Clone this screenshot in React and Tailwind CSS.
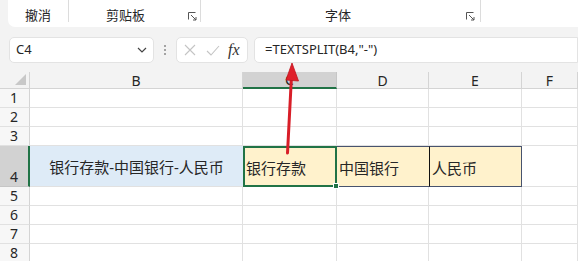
import React from "react";

const font = { fontFamily: '"Noto Sans", "Noto Sans CJK SC", sans-serif' };

function Launcher() {
  return (
    <svg width="9" height="9" viewBox="0 0 9 9" className="block">
      <path d="M0.5 0.5h7" stroke="#555" strokeWidth="1" fill="none" />
      <path d="M0.5 0.5v7" stroke="#555" strokeWidth="1" fill="none" />
      <path d="M3 3l5 5M8 5v3H5" stroke="#555" strokeWidth="1" fill="none" />
    </svg>
  );
}

const cols = ["B", "C", "D", "E", "F"];

export default function App() {
  const rows = [1, 2, 3, 4, 5, 6, 7, 8];
  return (
    <div className="relative w-[578px] h-[261px] overflow-hidden bg-[#f3f3f3] text-[#262626]" style={font}>
      {/* Ribbon */}
      <div className="ml-[8px] h-[27px] bg-white rounded-bl-[7px] flex items-stretch text-[13px]">
        <div className="w-[60px] flex items-end justify-center pb-[2px]">撤消</div>
        <div className="w-px bg-[#dcdcdc] mb-[5px]" />
        <div className="w-[131px] relative flex items-end justify-center pb-[2px]">
          <span className="mr-[18px]">剪贴板</span>
          <span className="absolute right-[3px] bottom-[6px]"><Launcher /></span>
        </div>
        <div className="w-px bg-[#dcdcdc] mb-[5px]" />
        <div className="w-[279px] relative flex items-end justify-center pb-[2px]">
          <span className="mr-[5px]">字体</span>
          <span className="absolute right-[5px] bottom-[6px]"><Launcher /></span>
        </div>
        <div className="w-px bg-[#dcdcdc] mb-[5px]" />
      </div>

      {/* Formula bar */}
      <div className="mt-[10px] h-[26px] flex items-stretch">
        <div className="ml-[9px] w-[145px] bg-white border border-[#e3e3e3] rounded-[5px] flex items-center justify-between pl-[6px] pr-[6px] text-[13px]">
          <span>C4</span>
          <svg width="10" height="6" viewBox="0 0 10 6"><path d="M1 1l4 4 4-4" stroke="#444" strokeWidth="1.2" fill="none" /></svg>
        </div>
        <div className="w-[22px] flex flex-col items-center justify-center gap-[2px]">
          <span className="w-[2px] h-[2px] bg-[#888] rounded-full" />
          <span className="w-[2px] h-[2px] bg-[#888] rounded-full" />
          <span className="w-[2px] h-[2px] bg-[#888] rounded-full" />
        </div>
        <div className="w-[72px] bg-white border border-[#e3e3e3] rounded-[5px] flex items-center pl-[6px]">
          <svg width="12" height="12" viewBox="0 0 12 12" className="ml-[1px]"><path d="M1 1l10 10M11 1L1 11" stroke="#c4c4c4" strokeWidth="1.1" fill="none" /></svg>
          <svg width="14" height="11" viewBox="0 0 14 11" className="ml-[10px]"><path d="M1 6l4 4 8-9" stroke="#c4c4c4" strokeWidth="1.1" fill="none" /></svg>
          <span className="ml-[8px] text-[16px] italic text-[#333] leading-none" style={{ fontFamily: '"Liberation Serif", serif' }}>fx</span>
        </div>
        <div className="ml-[6px] flex-1 bg-white border border-[#e3e3e3] rounded-l-[5px] flex items-center pl-[10px] text-[13px]">
          =TEXTSPLIT(B4,"-")
        </div>
      </div>

      {/* Grid */}
      <div
        className="mt-[9px] grid grid-cols-[30px_213px_94px_92px_93px_56px] grid-rows-[17px_19px_19px_19px_41px_19px_19px_19px_19px] bg-white"
      >
        {/* corner */}
        <div className="bg-[#f3f3f3] border-r border-b border-[#d4d4d4] relative">
          <svg width="11" height="11" viewBox="0 0 11 11" className="absolute left-[15px] bottom-[3px]"><path d="M11 0v11H0z" fill="#c8c8c8" /></svg>
        </div>
        {cols.map((c) => (
          <div
            key={c}
            className={
              c === "C"
                ? "bg-[#d2d2d2] border-b-2 border-b-[#217346] border-r border-r-[#c6c6c6] flex items-center justify-center text-[14px]"
                : "bg-[#f3f3f3] border-b border-b-[#d4d4d4] border-r border-r-[#d4d4d4] flex items-center justify-center text-[14px]"
            }
          >
            {c}
          </div>
        ))}
        {rows.map((r) => (
          <React.Fragment key={r}>
            <div
              className={
                r === 4
                  ? "bg-[#d2d2d2] border-r-2 border-r-[#217346] border-b border-b-[#c6c6c6] flex items-end pl-[10px] text-[14px] leading-[18px]"
                  : "bg-[#f7f7f7] border-r border-r-[#d4d4d4] border-b border-b-[#e1e1e1] flex items-end pl-[10px] text-[14px] leading-[18px]"
              }
            >
              {r}
            </div>
            {r === 4 ? (
              <>
                <div className="bg-[#deebf7] border-b border-[#e1e1e1] flex items-center justify-center pt-[3px] text-[15px]">
                  银行存款-中国银行-人民币
                </div>
                <div className="relative bg-[#fff2cc] border-2 border-[#217346] flex items-center pl-[1px] pt-[3px] text-[15px]">
                  银行存款
                  <span className="absolute right-[-4px] bottom-[-4px] w-[6px] h-[6px] bg-[#217346] border border-white" />
                </div>
                <div className="bg-[#fff2cc] border-y border-[#48536e] flex items-center pl-[2px] pt-[3px] text-[15px]">中国银行</div>
                <div className="bg-[#fff2cc] border border-[#48536e] border-l-[#111] flex items-center pl-[2px] pt-[3px] text-[15px]">人民币</div>
                <div className="border-b border-r border-[#e1e1e1]" />
              </>
            ) : (
              cols.map((c) => <div key={c} className="border-b border-r border-[#e1e1e1]" />)
            )}
          </React.Fragment>
        ))}
      </div>

      {/* Arrow overlay */}
      <svg className="absolute left-0 top-0 pointer-events-none" width="578" height="261" viewBox="0 0 578 261">
        <path d="M287.5 153 L291.5 76" stroke="#d81e28" strokeWidth="3" strokeLinecap="round" fill="none" />
        <path d="M292 63 L298.5 81 L286 80 Z" fill="#e01f2a" stroke="#c0141e" strokeWidth="0.8" />
      </svg>
    </div>
  );
}
